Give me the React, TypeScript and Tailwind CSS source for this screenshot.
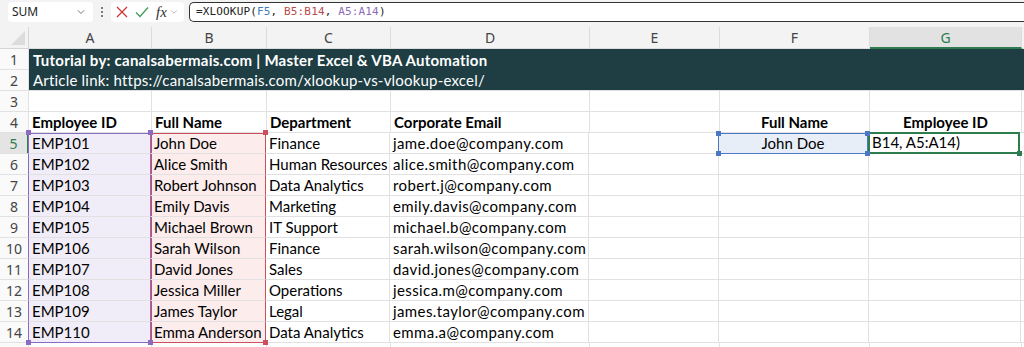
import { ChevronDown } from "lucide-react";

const COLS = [
  "w-[123px]",
  "w-[115px]",
  "w-[124px]",
  "w-[199px]",
  "w-[130px]",
  "w-[150px]",
  "w-[152px]",
];
const LETTERS = ["A", "B", "C", "D", "E", "F", "G"];

const EMPLOYEES = [
  ["EMP101", "John Doe", "Finance", "jame.doe@company.com"],
  ["EMP102", "Alice Smith", "Human Resources", "alice.smith@company.com"],
  ["EMP103", "Robert Johnson", "Data Analytics", "robert.j@company.com"],
  ["EMP104", "Emily Davis", "Marketing", "emily.davis@company.com"],
  ["EMP105", "Michael Brown", "IT Support", "michael.b@company.com"],
  ["EMP106", "Sarah Wilson", "Finance", "sarah.wilson@company.com"],
  ["EMP107", "David Jones", "Sales", "david.jones@company.com"],
  ["EMP108", "Jessica Miller", "Operations", "jessica.m@company.com"],
  ["EMP109", "James Taylor", "Legal", "james.taylor@company.com"],
  ["EMP110", "Emma Anderson", "Data Analytics", "emma.a@company.com"],
];

const cellFont = "font-['Lato','Open_Sans',sans-serif] text-[15px] text-black";
const uiFont = "font-['Noto_Sans','Open_Sans',sans-serif]";

function Handle({ pos, color }: { pos: string; color: string }) {
  return <span className={`absolute z-10 h-[5px] w-[5px] ${pos} ${color}`} />;
}

function RowHeader({ n, active }: { n?: number; active?: boolean }) {
  return (
    <div
      className={`flex w-[29px] shrink-0 items-center justify-center border-b border-r text-[14px] ${uiFont} ${
        active
          ? "border-r-2 border-b-[#e1e1e1] border-r-[#2e7d4f] bg-[#e4e4e4] text-[#2e7d4f]"
          : "border-[#e1e1e1] bg-[#fafafa] text-[#444]"
      }`}
    >
      {n}
    </div>
  );
}

function FormulaBar() {
  return (
    <div className={`flex h-[27px] items-start bg-[#f3f3f3] pt-[2px] ${uiFont}`}>
      <div className="ml-[8px] flex h-[20px] w-[85px] items-center justify-between rounded-[4px] bg-white pl-[4px] pr-[6px] text-[12px] text-[#222]">
        SUM
        <ChevronDown className="h-[12px] w-[12px] text-[#555]" strokeWidth={1.6} />
      </div>
      <div className="flex h-[20px] w-[18px] flex-col items-center justify-center gap-[2px]">
        <span className="h-[2px] w-[2px] rounded-full bg-[#555]" />
        <span className="h-[2px] w-[2px] rounded-full bg-[#555]" />
        <span className="h-[2px] w-[2px] rounded-full bg-[#555]" />
      </div>
      <div className="flex h-[20px] w-[73px] items-center gap-[7px] rounded-[4px] bg-white pl-[5px]">
        <svg viewBox="0 0 12 12" className="h-[12px] w-[12px]" fill="none" stroke="#d13438" strokeWidth={1.3}>
          <path d="M1 1l10 10M11 1L1 11" />
        </svg>
        <svg viewBox="0 0 14 12" className="h-[12px] w-[14px]" fill="none" stroke="#3f9a5a" strokeWidth={1.3}>
          <path d="M1 6.5l4 4L13 1.5" />
        </svg>
        <span className="font-['Liberation_Serif',serif] text-[15px] italic leading-none text-[#333]">
          fx
        </span>
        <ChevronDown className="-ml-[5px] h-[10px] w-[10px] text-[#888]" strokeWidth={1.5} />
      </div>
      <div className="ml-[5px] flex h-[20px] flex-1 items-center rounded-l-[5px] border-[1.5px] border-r-0 border-[#333] bg-white pl-[6px] font-['DejaVu_Sans_Mono',monospace] text-[11px] tracking-[0.15px] text-[#222]">
        =XLOOKUP(<span className="text-[#3b7fc4]">F5</span>,&nbsp;
        <span className="text-[#b94a4a]">B5:B14</span>,&nbsp;
        <span className="text-[#8e6bb8]">A5:A14</span>)
      </div>
    </div>
  );
}

function ColumnHeaders() {
  return (
    <div className={`flex h-[22px] bg-[#f3f3f3] text-[14px] ${uiFont}`}>
      <div className="relative w-[29px] shrink-0 border-b border-r border-[#d6d6d6]">
        <span className="absolute bottom-[3px] right-[3px] h-0 w-0 border-b-[14px] border-l-[14px] border-b-[#dcdcdc] border-l-transparent" />
      </div>
      {LETTERS.map((l, i) => (
        <div
          key={l}
          className={`flex shrink-0 items-center justify-center border-r ${COLS[i]} ${
            l === "G"
              ? "border-b-2 border-b-[#2e7d4f] border-r-[#dcdcdc] bg-[#e2e2e2] text-[#2e7d4f]"
              : "border-b border-[#dcdcdc] text-[#444]"
          }`}
        >
          {l}
        </div>
      ))}
      <div className="flex-1 border-b border-[#dcdcdc]" />
    </div>
  );
}

function Cell({
  w,
  children,
  className = "",
  bold,
  center,
}: {
  w: string;
  children?: React.ReactNode;
  className?: string;
  bold?: boolean;
  center?: boolean;
}) {
  return (
    <div
      className={`relative flex shrink-0 items-end overflow-visible whitespace-nowrap border-b border-r border-[#e1e1e1] px-[3px] pb-[1px] leading-[18px] ${cellFont} ${w} ${
        bold ? "font-bold" : ""
      } ${center ? "justify-center" : ""} ${className}`}
    >
      {children}
    </div>
  );
}

function DataRow({ n }: { n: number }) {
  const idx = n - 5;
  const emp = EMPLOYEES[idx];
  const first = idx === 0;
  const last = idx === EMPLOYEES.length - 1;
  return (
    <div className="flex h-[21px]">
      <RowHeader n={n} active={n === 5} />
      <Cell
        w={COLS[0]}
        className={`-ml-px !border-r !border-l border-l-[#8a6bc2] !border-r-[#8a6bc2] bg-[#f1edf8] ${
          first ? "shadow-[inset_0_1px_0_#8a6bc2]" : ""
        } ${last ? "!border-b-[#8a6bc2]" : ""}`}
      >
        {emp[0]}
        {first && <Handle pos="-left-[3px] -top-[3px]" color="bg-[#8a6bc2]" />}
        {first && <Handle pos="-right-[3px] -top-[3px]" color="bg-[#8a6bc2]" />}
        {last && <Handle pos="-left-[3px] -bottom-[3px]" color="bg-[#8a6bc2]" />}
        {last && <Handle pos="-right-[3px] -bottom-[3px]" color="bg-[#8a6bc2]" />}
      </Cell>
      <Cell
        w={COLS[1]}
        className={`!border-r-[#c9505c] bg-[#fcecec] shadow-[inset_1px_0_0_#c9505c] ${
          first ? "shadow-[inset_1px_1px_0_#c9505c]" : ""
        } ${last ? "!border-b-[#c9505c]" : ""}`}
      >
        {emp[1]}
        {first && <Handle pos="-right-[3px] -top-[3px]" color="bg-[#c9505c]" />}
        {last && <Handle pos="-right-[3px] -bottom-[3px]" color="bg-[#c9505c]" />}
      </Cell>
      <Cell w={COLS[2]}>{emp[2]}</Cell>
      <Cell w={COLS[3]} className="tracking-[0.4px]">{emp[3]}</Cell>
      <Cell w={COLS[4]} />
      {first ? (
        <Cell w={COLS[5]} center className="!border !border-[#4a78c4] bg-[#e8eef8] -ml-px">
          John Doe
          <Handle pos="-left-[3px] -top-[3px]" color="bg-[#4a78c4]" />
          <Handle pos="-right-[3px] -top-[3px]" color="bg-[#4a78c4]" />
          <Handle pos="-left-[3px] -bottom-[3px]" color="bg-[#4a78c4]" />
          <Handle pos="-right-[3px] -bottom-[3px]" color="bg-[#4a78c4]" />
        </Cell>
      ) : (
        <Cell w={COLS[5]} />
      )}
      {first ? (
        <Cell w={COLS[6]} className="!border-2 !border-[#2e7d4f] -mt-px !px-[2px]">
          B14, A5:A14)
          <Handle pos="-right-[4px] -bottom-[4px]" color="bg-[#2e7d4f]" />
        </Cell>
      ) : (
        <Cell w={COLS[6]} />
      )}
      <div className="flex-1 border-b border-[#e1e1e1]" />
    </div>
  );
}

export default function App() {
  return (
    <div className="h-[347px] w-[1024px] overflow-hidden bg-white">
      <FormulaBar />
      <ColumnHeaders />

      {/* Title block, rows 1-2 */}
      <div className="flex h-[21px]">
        <RowHeader n={1} />
        <div className={`flex flex-1 items-end bg-[#1e3e44] px-[4px] pb-[1px] font-bold leading-[18px] tracking-[0.25px] ${cellFont} !text-white`}>
          Tutorial by: canalsabermais.com | Master Excel &amp; VBA Automation
        </div>
      </div>
      <div className="flex h-[21px]">
        <RowHeader n={2} />
        <div className={`flex flex-1 items-end border-b border-[#e1e1e1] bg-[#1e3e44] px-[4px] pb-[1px] leading-[18px] tracking-[0.2px] ${cellFont} !text-white`}>
          Article link: https://canalsabermais.com/xlookup-vs-vlookup-excel/
        </div>
      </div>

      <div className="flex h-[21px]">
        <RowHeader n={3} />
        {COLS.map((w) => (
          <Cell key={w} w={w} />
        ))}
        <div className="flex-1 border-b border-[#e1e1e1]" />
      </div>

      <div className="flex h-[21px]">
        <RowHeader n={4} />
        <Cell w={COLS[0]} bold>Employee ID</Cell>
        <Cell w={COLS[1]} bold>Full Name</Cell>
        <Cell w={COLS[2]} bold>Department</Cell>
        <Cell w={COLS[3]} bold>Corporate Email</Cell>
        <Cell w={COLS[4]} />
        <Cell w={COLS[5]} bold center>Full Name</Cell>
        <Cell w={COLS[6]} bold center>Employee ID</Cell>
        <div className="flex-1 border-b border-[#e1e1e1]" />
      </div>

      {EMPLOYEES.map((_, i) => (
        <DataRow key={i} n={i + 5} />
      ))}

      {/* row 15 is only a sliver at the bottom edge */}
      <div className="flex h-[21px]">
        <RowHeader />
        {COLS.map((w) => (
          <Cell key={w} w={w} />
        ))}
        <div className="flex-1 border-b border-[#e1e1e1]" />
      </div>
    </div>
  );
}
